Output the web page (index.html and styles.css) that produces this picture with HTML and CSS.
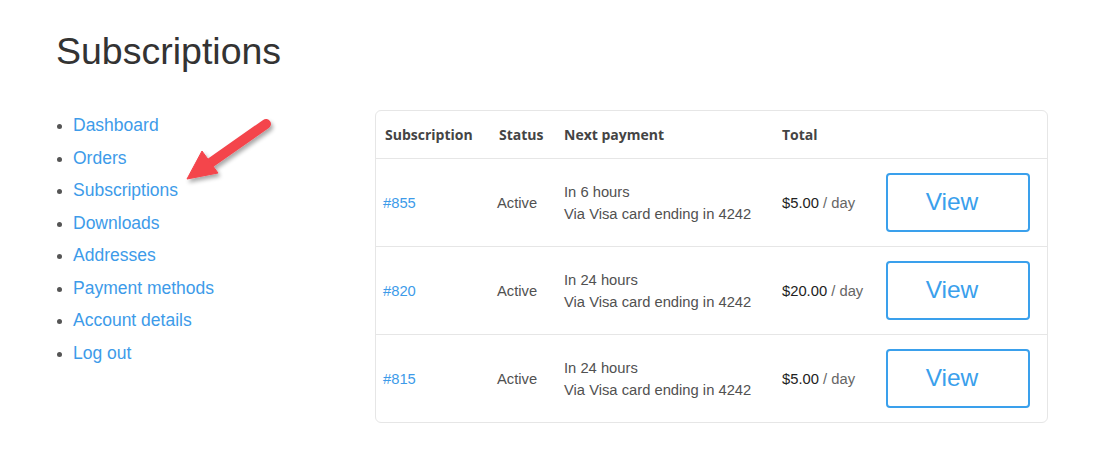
FILE: index.html
```html
<!DOCTYPE html>
<html>
<head>
<meta charset="utf-8">
<link rel="stylesheet" href="styles.css">
</head>
<body>
<div class="page">
  <h1 class="title">Subscriptions</h1>
  <div class="layout">
    <ul class="nav">
      <li><a href="#">Dashboard</a></li>
      <li><a href="#">Orders</a></li>
      <li><a href="#">Subscriptions</a></li>
      <li><a href="#">Downloads</a></li>
      <li><a href="#">Addresses</a></li>
      <li><a href="#">Payment methods</a></li>
      <li><a href="#">Account details</a></li>
      <li><a href="#">Log out</a></li>
    </ul>
    <div class="card">
      <table class="subs">
        <colgroup>
          <col class="c1"><col class="c2"><col class="c3"><col class="c4"><col class="c5">
        </colgroup>
        <thead>
          <tr><th class="first">Subscription</th><th>Status</th><th>Next payment</th><th>Total</th><th></th></tr>
        </thead>
        <tbody>
          <tr>
            <td class="first"><a href="#">#855</a></td>
            <td class="status">Active</td>
            <td class="next">In 6 hours<br>Via Visa card ending in 4242</td>
            <td><span class="amt">$5.00</span> <span class="per">/ day</span></td>
            <td><a class="btn" href="#">View</a></td>
          </tr>
          <tr>
            <td class="first"><a href="#">#820</a></td>
            <td class="status">Active</td>
            <td class="next">In 24 hours<br>Via Visa card ending in 4242</td>
            <td><span class="amt">$20.00</span> <span class="per">/ day</span></td>
            <td><a class="btn" href="#">View</a></td>
          </tr>
          <tr>
            <td class="first"><a href="#">#815</a></td>
            <td class="status">Active</td>
            <td class="next">In 24 hours<br>Via Visa card ending in 4242</td>
            <td><span class="amt">$5.00</span> <span class="per">/ day</span></td>
            <td><a class="btn" href="#">View</a></td>
          </tr>
        </tbody>
      </table>
    </div>
  </div>
  <svg class="arrow" width="110" height="90" viewBox="170 105 110 90">
    <defs>
      <filter id="sh" x="-30%" y="-30%" width="160%" height="160%">
        <feGaussianBlur in="SourceAlpha" stdDeviation="2"/>
        <feOffset dx="2" dy="3"/>
        <feComponentTransfer><feFuncA type="linear" slope="0.35"/></feComponentTransfer>
        <feMerge><feMergeNode/><feMergeNode in="SourceGraphic"/></feMerge>
      </filter>
    </defs>
    <g filter="url(#sh)" fill="#f4444c" stroke="#f4444c">
      <line x1="266" y1="124" x2="206" y2="166" stroke-width="10" stroke-linecap="round"/>
      <polygon points="187,179 202,151 218,173" stroke-width="1" stroke-linejoin="round"/>
    </g>
  </svg>
</div>
</body>
</html>
```

FILE: styles.css
```css
html, body {
  margin: 0;
  padding: 0;
  background: #fff;
}
body {
  font-family: "Liberation Sans", Arial, sans-serif;
  color: #515151;
}
.page {
  position: relative;
  box-sizing: border-box;
  padding: 30px 0 0 56px;
  width: 1100px;
  height: 450px;
  overflow: hidden;
}
.title {
  margin: 0;
  font-size: 37.5px;
  line-height: 43px;
  font-weight: normal;
  color: #333;
}
.layout {
  display: flex;
  align-items: flex-start;
  margin-top: 36px;
}
.nav {
  width: 302px;
  margin: 0;
  padding: 0 0 0 17px;
  list-style: disc;
  font-size: 17.5px;
  line-height: 32.5px;
  color: #555;
}
.nav li::marker {
  font-size: 15px;
}
.nav a {
  color: #3d9be9;
  text-decoration: none;
}
.card {
  box-sizing: border-box;
  width: 673px;
  margin-top: 1px;
  border: 1px solid #e6e6e6;
  border-radius: 6px;
}
.subs {
  width: 100%;
  table-layout: fixed;
  border-collapse: collapse;
}
.c1 { width: 114px; }
.c2 { width: 65px; }
.c3 { width: 218px; }
.c4 { width: 104px; }
.subs th {
  height: 47px;
  padding: 0 0 0 9px;
  text-align: left;
  font-family: "Open Sans", sans-serif;
  font-weight: 700;
  font-size: 14px;
  color: #444;
  border-bottom: 1px solid #e6e6e6;
}
.subs td {
  height: 87px;
  padding: 0 0 0 9px;
  font-size: 14.75px;
  line-height: 22px;
  vertical-align: middle;
  white-space: nowrap;
}
.subs td.first {
  padding-left: 7px;
}
.subs td.status {
  padding-left: 7px;
}
.subs tbody tr + tr td {
  border-top: 1px solid #e6e6e6;
}
.subs td a {
  color: #3d9be9;
  text-decoration: none;
}
.amt {
  color: #222;
}
.per {
  color: #666;
}
.subs td a.btn {
  box-sizing: border-box;
  display: flex;
  align-items: center;
  justify-content: center;
  width: 144px;
  height: 59px;
  padding: 0 12px 1px 0;
  border: 2px solid #3aa0ec;
  border-radius: 4px;
  color: #3aa0ec;
  font-size: 24.5px;
}
.arrow {
  position: absolute;
  left: 170px;
  top: 105px;
}
```
